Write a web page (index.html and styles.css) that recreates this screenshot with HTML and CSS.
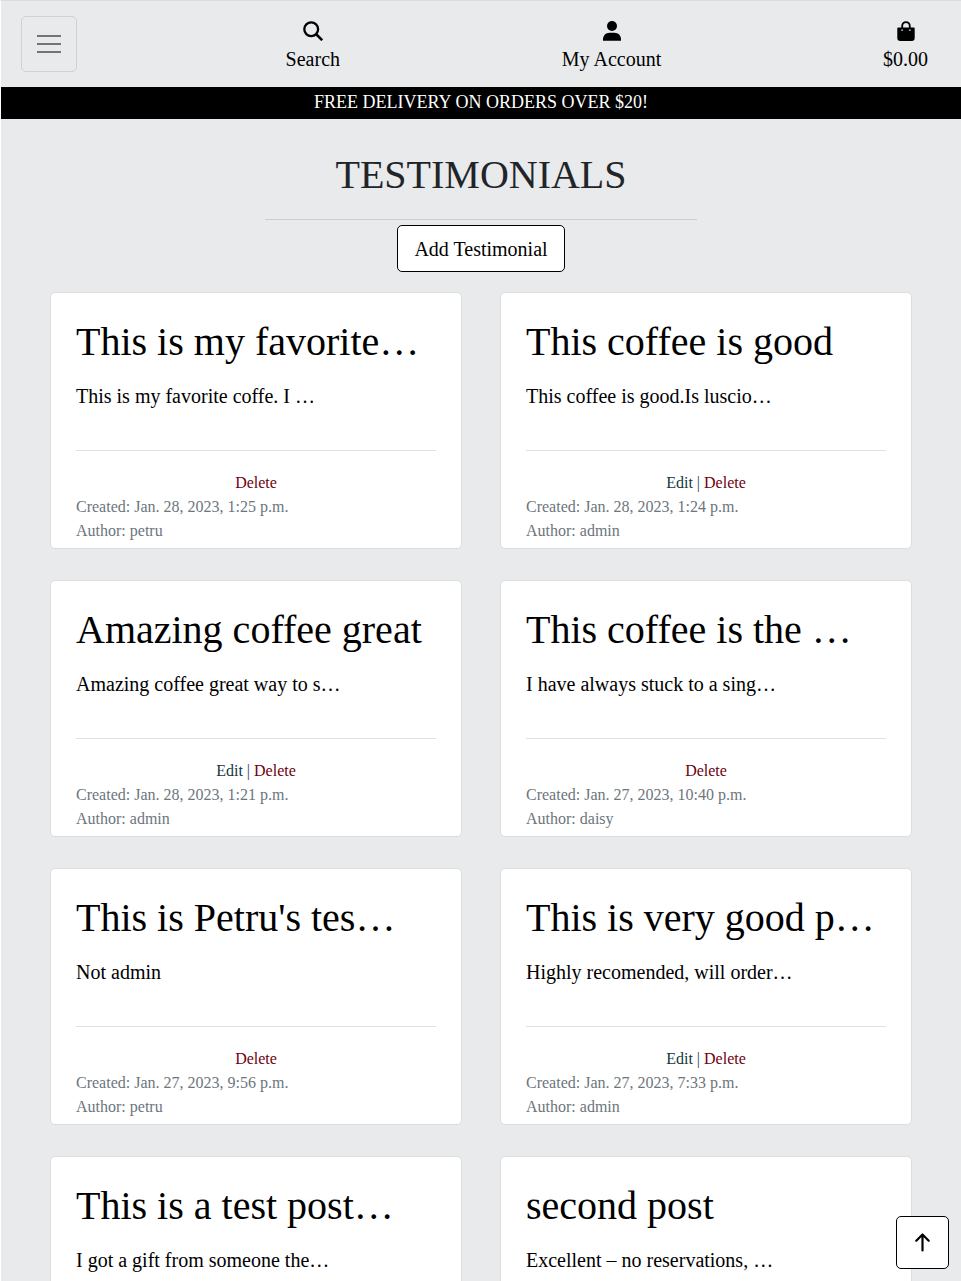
FILE: index.html
```html
<!DOCTYPE html>
<html lang="en">
<head>
<meta charset="utf-8">
<meta name="viewport" content="width=device-width, initial-scale=1">
<title>Testimonials</title>
<link rel="stylesheet" href="styles.css">
</head>
<body>
<header>
  <nav class="navbar">
    <button class="toggler" type="button" aria-label="Toggle navigation">
      <svg width="30" height="30" viewBox="0 0 30 30" fill="none" stroke="#737475" stroke-width="2"><path d="M3 7h24M3 15h24M3 23h24"/></svg>
    </button>
    <ul class="nav-list">
      <li><a class="nav-link" href="#">
        <svg width="20" height="20" viewBox="0 0 20 20" fill="none" stroke="#000" stroke-width="2.300"><circle cx="8.200" cy="8.200" r="6.900"/><path d="M13 13l6.200 6.200" stroke-width="2.600"/></svg>
        <span>Search</span></a></li>
      <li><a class="nav-link" href="#">
        <svg width="20" height="20" viewBox="0 0 20 20"><circle cx="10" cy="5" r="5"/><path d="M1 19.700v-1.500C1 14.500 3.900 11.700 7.500 11.700h5c3.600 0 6.500 2.800 6.500 6.500v1.500z"/></svg>
        <span>My Account</span></a></li>
      <li><a class="nav-link" href="#">
        <svg width="20" height="20" viewBox="0 0 20 20"><path d="M6.200 8.500V4.900a3.800 3.800 0 0 1 7.600 0v3.600" fill="none" stroke="#000" stroke-width="1.800"/><path fill-rule="evenodd" d="M2.300 6.500h15.400a1 1 0 0 1 1 1V17a3 3 0 0 1-3 3H4.300a3 3 0 0 1-3-3V7.500a1 1 0 0 1 1-1zM6.200 8a.9.900 0 1 0 0 1.800.9.900 0 0 0 0-1.800zm7.600 0a.9.900 0 1 0 0 1.800.9.900 0 0 0 0-1.800z"/></svg>
        <span>$0.00</span></a></li>
    </ul>
  </nav>
  <p class="banner">FREE DELIVERY ON ORDERS OVER $20!</p>
</header>
<main>
  <section class="intro">
    <h1>TESTIMONIALS</h1>
    <hr>
    <a class="add-button" href="#">Add Testimonial</a>
  </section>
  <section class="cards">
    <article class="card">
      <div class="card-body"><h2>This is my favorite…</h2><p>This is my favorite coffe. I …</p></div>
      <hr>
      <footer><p class="actions"><a class="delete" href="#">Delete</a></p><p>Created: Jan. 28, 2023, 1:25 p.m.</p><p>Author: petru</p></footer>
    </article>
    <article class="card">
      <div class="card-body"><h2>This coffee is good</h2><p>This coffee is good.Is luscio…</p></div>
      <hr>
      <footer><p class="actions"><a class="edit" href="#">Edit</a> | <a class="delete" href="#">Delete</a></p><p>Created: Jan. 28, 2023, 1:24 p.m.</p><p>Author: admin</p></footer>
    </article>
    <article class="card">
      <div class="card-body"><h2>Amazing coffee great</h2><p>Amazing coffee great way to s…</p></div>
      <hr>
      <footer><p class="actions"><a class="edit" href="#">Edit</a> | <a class="delete" href="#">Delete</a></p><p>Created: Jan. 28, 2023, 1:21 p.m.</p><p>Author: admin</p></footer>
    </article>
    <article class="card">
      <div class="card-body"><h2>This coffee is the …</h2><p>I have always stuck to a sing…</p></div>
      <hr>
      <footer><p class="actions"><a class="delete" href="#">Delete</a></p><p>Created: Jan. 27, 2023, 10:40 p.m.</p><p>Author: daisy</p></footer>
    </article>
    <article class="card">
      <div class="card-body"><h2>This is Petru's tes…</h2><p>Not admin</p></div>
      <hr>
      <footer><p class="actions"><a class="delete" href="#">Delete</a></p><p>Created: Jan. 27, 2023, 9:56 p.m.</p><p>Author: petru</p></footer>
    </article>
    <article class="card">
      <div class="card-body"><h2>This is very good p…</h2><p>Highly recomended, will order…</p></div>
      <hr>
      <footer><p class="actions"><a class="edit" href="#">Edit</a> | <a class="delete" href="#">Delete</a></p><p>Created: Jan. 27, 2023, 7:33 p.m.</p><p>Author: admin</p></footer>
    </article>
    <article class="card">
      <div class="card-body"><h2>This is a test post…</h2><p>I got a gift from someone the…</p></div>
    </article>
    <article class="card">
      <div class="card-body"><h2>second post</h2><p>Excellent – no reservations, …</p></div>
    </article>
  </section>
</main>
<a class="to-top" href="#" aria-label="Back to top">
  <svg width="16" height="20" viewBox="0 0 16 20" fill="none" stroke="#000" stroke-width="2.200" stroke-linecap="round" stroke-linejoin="round"><path d="M7.500 17.500V1.500M1.300 7.700l6.200-6.200 6.200 6.200"/></svg>
</a>
</body>
</html>
```

FILE: styles.css
```css
* { box-sizing: border-box; }

body {
  margin: 0;
  border-left: 1px solid #fff;
  border-top: 1px solid #dcdddf;
  background: #e9eaec;
  color: #000;
  font: 20px/30px "Liberation Serif", "Times New Roman", serif;
}

h1, h2, p, ul { margin: 0; padding: 0; font-weight: 400; }
a { color: inherit; text-decoration: none; }
hr { margin: 0; border: 0; border-top: 1px solid rgba(0, 0, 0, 0.12); }

.navbar {
  display: flex;
  align-items: flex-start;
  padding: 15px 33px 13px 20px;
}
.toggler {
  display: grid;
  place-items: center;
  width: 56px;
  height: 56px;
  padding: 0;
  border: 1px solid #d0d1d3;
  border-radius: 5px;
  background: none;
}
.nav-list {
  display: flex;
  flex: 1;
  justify-content: space-between;
  margin-left: 23%;
  list-style: none;
}
.nav-link {
  display: flex;
  flex-direction: column;
  align-items: center;
  gap: 3px;
  padding-top: 5px;
}
.banner {
  padding-bottom: 2px;
  background: #000;
  color: #fff;
  font-size: 18px;
  text-align: center;
}

.intro {
  display: flex;
  flex-direction: column;
  align-items: center;
  padding-top: 32px;
}
h1 {
  color: #212529;
  font-size: 40px;
  line-height: 48px;
}
.intro hr { width: 45%; margin: 20px 0 5px; }
.add-button {
  padding: 8px 16px 7px;
  border: 1px solid #000;
  border-radius: 5px;
  background: #fff;
}

.cards {
  display: grid;
  grid-template-columns: 1fr 1fr;
  gap: 31px 38px;
  padding: 20px 49px 31px;
}
.card {
  padding: 25px 25px 5px;
  border: 1px solid #dcdddf;
  border-radius: 5px;
  background: #fff;
}
.card-body { padding-bottom: 39px; }
h2 {
  margin-bottom: 15px;
  font-size: 40px;
  line-height: 48px;
}
.card footer {
  padding-top: 20px;
  color: #6c757d;
  font-size: 16px;
  line-height: 24px;
}
.actions { color: #3b3b6b; text-align: center; }
.edit { color: #123840; }
.delete { color: #6e0010; }

.to-top {
  position: fixed;
  right: 12px;
  bottom: 12px;
  display: grid;
  place-items: center;
  width: 53px;
  height: 53px;
  border: 1px solid #000;
  border-radius: 5px;
  background: #fff;
}
```
